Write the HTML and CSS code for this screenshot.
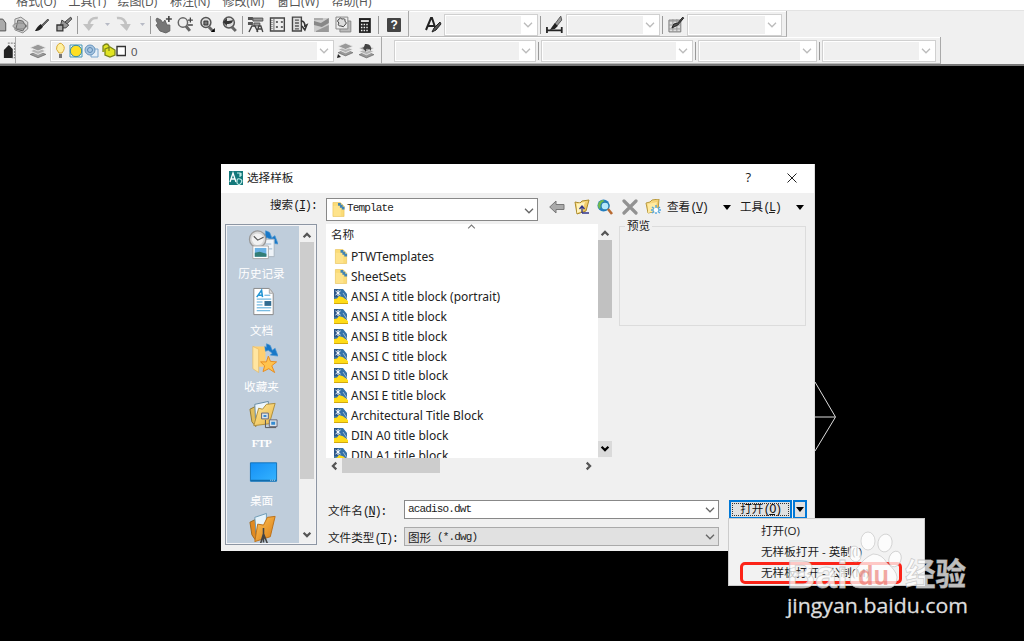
FILE: index.html
```html
<!DOCTYPE html>
<html lang="zh-CN">
<head>
<meta charset="utf-8">
<title>选择样板</title>
<link rel="stylesheet" href="styles.css">
</head>
<body>
<svg class="defs">
  <linearGradient id="gold" x1="0" y1="0" x2="1" y2="1"><stop offset="0" stop-color="#ffe99c"/><stop offset="1" stop-color="#e9b543"/></linearGradient>
  <linearGradient id="orange" x1="0" y1="0" x2="1" y2="1"><stop offset="0" stop-color="#ffc45c"/><stop offset="1" stop-color="#d97c10"/></linearGradient>
  <linearGradient id="blue" x1="0" y1="0" x2="1" y2="1"><stop offset="0" stop-color="#158ff5"/><stop offset="1" stop-color="#35b4ff"/></linearGradient>
  <symbol id="chev" viewBox="0 0 10 6"><path d="M1 .8 5 4.8 9 .8" fill="none" stroke="currentColor" stroke-width="1.3"/></symbol>
  <symbol id="bold-chev" viewBox="0 0 10 8"><path d="M1.6 1.7 5 5.1 8.400 1.7" fill="none" stroke="currentColor" stroke-width="2.2"/></symbol>
  <symbol id="folder" viewBox="0 0 14 16"><path d="M1 .5h8l4 4v11H1z" fill="#fbdc77" stroke="#e6bd50" stroke-width=".6"/><path d="M1.5 4h8v11h-8z" fill="#ffe796" opacity=".65"/><path d="M6.500 1h3v2h2v2h2v3h-3V6h-2V4h-2z" fill="#3f83b5"/></symbol>
  <symbol id="dwt" viewBox="0 0 14 15"><path d="M0 0h9l4 5v6l-6-2-7 2z" fill="#3672a8"/><path d="M0 0h4v8H0z" fill="#2a5588"/><path d="M4 1v6M1.500 2l5 4M6.500 2l-5 4" stroke="#fff" stroke-width="1"/><path d="M9 4l4 6" stroke="#9dbbd2" stroke-width="1"/><path d="M0 10 3 9.500 5 7l4 1.200L14 12v3H0z" fill="#ffdc18"/><path d="M0 14h14v1H0z" fill="#d3a810"/></symbol>
  <symbol id="layers" viewBox="0 0 16 16"><path d="M1 11l7-3 7 3-7 3z" fill="#999" stroke="#666" stroke-width=".6"/><path d="M1 8l7-3 7 3-7 3z" fill="#b4b4b4" stroke="#eee" stroke-width=".8"/><path d="M1 5l7-3 7 3-7 3z" fill="#999" stroke="#e8e8e8" stroke-width=".8"/></symbol>
  <symbol id="links" viewBox="0 0 14 14"><path d="M2 0l4 2 2 5 3-2 3 8-8-1 2-2-4-3-3 1-1-5 2 1z" fill="#1878c8" stroke="#4a96d2" stroke-width=".7"/></symbol>
</svg>

<nav class="menubar"><span>格式(O)</span><span>工具(T)</span><span>绘图(D)</span><span>标注(N)</span><span>修改(M)</span><span>窗口(W)</span><span>帮助(H)</span></nav>

<div class="toolbar">
  <div class="group std">
    <svg class="ic" viewBox="0 0 22 22"><path d="M10 5h5l3 4v8h-8z" fill="#aaa" stroke="#555"/></svg>
    <svg class="ic" viewBox="0 0 22 22"><path d="M5 5l6-2 7 5v7l-5 4-8-3z" fill="#ddd" stroke="#888"/><path d="M8 6l5 1 3 5-3 5-7-2z" fill="#aaa" stroke="#666"/><ellipse cx="10" cy="12" rx="7" ry="3" fill="none" stroke="#888"/></svg>
    <svg class="ic" viewBox="0 0 22 22"><path d="M17 5l-7 7 1 1 7-7z" fill="#777" stroke="#444"/><path d="M10 10l2 3c-3 4-6 4-8 4 2-3 3-5 6-7z" fill="#222"/></svg>
    <svg class="ic" viewBox="0 0 22 22"><path d="M18 3l-6 5 2 2 5-5z" fill="#888" stroke="#444"/><path d="M9 6l7 5-3 3H7z" fill="#999" stroke="#444"/><path d="M4 11h6v6H4z" fill="#aaa" stroke="#333" stroke-width="1.3"/></svg>
    <i class="sep"></i>
    <svg class="ic" viewBox="0 0 22 22"><path d="M17 4C11 3 8 7 8 11" fill="none" stroke="#c2c2c2" stroke-width="2.6"/><path d="M2 10h11l-5 7z" fill="#c2c2c2"/></svg>
    <svg class="tiny" viewBox="0 0 12 22"><path d="M3 9h5L5.500 12z" fill="#b7bac5"/></svg>
    <svg class="ic" viewBox="0 0 22 22"><path d="M3 4c6-1 9 3 9 7" fill="none" stroke="#c2c2c2" stroke-width="2.600"/><path d="M6 10h11l-4 7z" fill="#c2c2c2"/></svg>
    <svg class="tiny" viewBox="0 0 12 22"><path d="M4 9h5L6.500 12z" fill="#b7bac5"/></svg>
    <i class="sep narrow"></i>
    <svg class="ic" viewBox="0 0 22 22"><path d="M4 4l4 2 2 3 2-3 2 5 3 0v6l-4 2-6-2-4-6 2-1-2-4z" fill="#777" stroke="#666"/><path d="M13 5h6M16 2v6" stroke="#444" stroke-width="1.600"/></svg>
    <svg class="ic" viewBox="0 0 22 22"><circle cx="8" cy="8.500" r="4.700" fill="#eee" stroke="#666" stroke-width="1.500"/><path d="M11 12l4 5" stroke="#666" stroke-width="3"/><path d="M13 6h5M15.500 3.500v5M13 11h5" stroke="#444" stroke-width="1.300"/></svg>
    <svg class="ic" viewBox="0 0 22 22"><circle cx="9" cy="8.500" r="5" fill="#ddd" stroke="#555" stroke-width="1.500"/><path d="M7 7h4v4H7z" fill="#777" stroke="#333"/><path d="M12 13l4 4" stroke="#666" stroke-width="3"/><path d="M18 14v4h-4z" fill="#000"/></svg>
    <svg class="ic" viewBox="0 0 22 22"><circle cx="10" cy="8.500" r="5.500" fill="#ddd" stroke="#555" stroke-width="1.500"/><path d="M13 13l4 4" stroke="#666" stroke-width="3"/><path d="M4 8l4 4v-2c4 0 6-1 6-4-2 1-4 1-6 1V4z" fill="#333"/></svg>
    <i class="sep narrow"></i>
    <svg class="ic" viewBox="0 0 22 22"><path d="M3 3h5v3H3zM3 8h5v3H3z" fill="#555"/><path d="M8 4h10v3H8zM9 9h6v3H9z" fill="#999" stroke="#555"/><path d="M4 18l3-6h3l3 6M12 18l2-6h2l2 6M13 15h4" fill="none" stroke="#444" stroke-width="1.400"/></svg>
    <svg class="ic" viewBox="0 0 22 22"><path d="M3.500 4h14v13h-14z" fill="#eee" stroke="#444" stroke-width="1.400"/><path d="M7 4v13" stroke="#666"/><path d="M9 7h2v2H9zM14 7h2v2h-2zM9 12h2v2H9zM14 12h2v2h-2z" fill="#666"/><path d="M5 6v9" stroke="#555" stroke-dasharray="1 1"/></svg>
    <svg class="ic" viewBox="0 0 22 22"><path d="M3.500 3h9v14h-9z" fill="#ddd" stroke="#444" stroke-width="1.400"/><path d="M6 6h4M6 9h4M6 12h4M6 15h4" stroke="#555" stroke-width="1.300"/><path d="M12 7c3 0 4 2 4 5l2-1-2 5-3-4" fill="none" stroke="#333" stroke-width="1.600"/></svg>
    <svg class="ic" viewBox="0 0 22 22"><path d="M3 4h15v14H3z" fill="#ccc"/><path d="M3 7l7 2 8-5v5l-7 4-8-2z" fill="#888"/><path d="M5 17l13-6v7H5z" fill="#999"/><path d="M3 4h9v2H3z" fill="#aaa"/></svg>
    <svg class="ic" viewBox="0 0 22 22"><path d="M7 7h11v11H7z" fill="#bbb" stroke="#888"/><path d="M3 3h12v12H3z" fill="#eee" stroke="#888"/><path d="M6 5q2-2 3 0 4-1 3 2 3 2 0 4-1 3-4 1-4 0-2-3-3-2 0-4z" fill="#ddd" stroke="#444"/></svg>
    <svg class="ic" viewBox="0 0 22 22"><path d="M5 4h12v15H5z" fill="#222"/><path d="M7 6h8v2H7z" fill="#ddd"/><path d="M7 10.500h8M7 13.500h8M7 16.500h8" stroke="#eee" stroke-width="1.400" stroke-dasharray="1.500 1.200"/></svg>
    <i class="sep narrow"></i>
    <span class="help">?</span>
  </div>
  <div class="group styles">
    <svg class="brush-a" viewBox="0 0 22 22"><path d="M4 16L9 4h1l4 12M6 12h7" fill="none" stroke="#222" stroke-width="2"/><path d="M18 8l-6 6-2 4 4-2 5-6z" fill="#555" stroke="#222"/></svg>
    <span class="combo w94"><svg><use href="#chev"/></svg></span><i class="sep six"></i>
    <svg class="ic" viewBox="0 0 22 22"><path d="M17 2l-6 8 2 2 5-6z" fill="#999" stroke="#555"/><path d="M11 9l3 3-3 3-5 1 2-3z" fill="#222"/><path d="M3 13v6M18 13v6M3 16.500h15" stroke="#222" stroke-width="1.800"/></svg>
    <span class="combo w94"><svg><use href="#chev"/></svg></span><i class="sep six"></i>
    <svg class="ic" viewBox="0 0 22 22"><path d="M3 6h12v12H3z" fill="#ddd" stroke="#777"/><path d="M3 7h12M3 11h12M3 15h12M7 5v13M11 5v13" stroke="#999"/><path d="M18 4l-6 7-6 3 2-4 4-1 5-6z" fill="#555" stroke="#222"/></svg>
    <span class="combo w95"><svg><use href="#chev"/></svg></span>
  </div>
</div>
<div class="toolbar second">
  <div class="group edge"><svg class="ic" viewBox="0 0 22 22"><path d="M8 10l5-5 4 4v9H8z" fill="#222"/><path d="M12 3h7v15h-3" fill="none" stroke="#777" stroke-dasharray="2 1"/></svg></div>
  <div class="group layerbar">
    <svg class="ic"><use href="#layers" x="2" y="2" width="18" height="18"/></svg>
    <span class="combo layer">
      <svg class="layer-icons" viewBox="0 0 75 20"><path d="M8 12Q4 8 6 5q3-5 6-1 3 3-1 8z" fill="#fff0a0" stroke="#d9ac3a"/><path d="M8 13h3v4H8z" fill="#777"/><path d="M19 4h12v12H19z" fill="none" stroke="#4497b8"/><circle cx="25" cy="10" r="5.700" fill="#ffdf23" stroke="#3b8da5"/><path d="M40 8h7v8h-7z" fill="#e6eff8" stroke="#7aa6cf"/><circle cx="39" cy="9" r="5" fill="#a8c6e2" stroke="#6794bd"/><circle cx="39" cy="9" r="2.500" fill="none" stroke="#5d89b4"/><path d="M52 11V5q4-4 6 0v5M54 8l5-2 5 3v5l-5 2-5-2z" fill="#e1e422" stroke="#7b851b" stroke-width="1.300"/><path d="M66 5.500h8.500v9H66z" fill="#fff" stroke="#333" stroke-width="1.400"/></svg><b>0</b>
      <svg><use href="#chev"/></svg></span>
    <svg class="ic"><use href="#layers" x="3" y="1" width="17" height="17"/><path d="M3 18l4-1-3-3z" fill="#222"/></svg>
    <svg class="ic"><use href="#layers" x="2" y="3" width="17" height="17"/><path d="M7 8l3 4 0-3q4-1 5 2 1-8-6-7l-1 3z" fill="#444"/></svg>
  </div>
  <div class="group props">
    <span class="combo p1"><svg><use href="#chev"/></svg></span><i class="sep six"></i>
    <span class="combo p2"><svg><use href="#chev"/></svg></span><i class="sep six"></i>
    <span class="combo p3"><svg><use href="#chev"/></svg></span><i class="sep six"></i>
    <span class="combo p4"><svg><use href="#chev"/></svg></span>
  </div>
</div>

<main class="canvas">
  <svg class="drawing" viewBox="0 0 22 72"><path d="M0 1l20.500 35L0 70M0 36h20" fill="none" stroke="#ddd"/></svg>

  <section class="dialog">
    <header>
      <svg class="app" viewBox="0 0 14 14"><path d="M0 0h14v14H0z" fill="#14797b"/><path d="M1 11L4 2l3 9M2 8h4" fill="none" stroke="#fff" stroke-width="1.300"/><path d="M8 2h3v4M8 10q0-3 3-2t1 4-4 0zM12 2v3" fill="none" stroke="#bceae6" stroke-width="1.200"/></svg>
      <h1>选择样板</h1><span class="q">?</span>
      <svg class="close" viewBox="0 0 10 10"><path d="M.5.5l9 9M9.500.5l-9 9" stroke="#222" stroke-width="1"/></svg>
    </header>
    <div class="lookup">
      <label>搜索<tt>(<u>I</u>):</tt></label>
      <div class="field look"><svg class="fold"><use href="#folder"/></svg><tt>Template</tt><svg class="ch"><use href="#chev"/></svg></div>
      <svg class="t back" viewBox="0 0 16 14"><path d="M.7 7L7 1v3.500h8v5H7V13z" fill="#aaa" stroke="#777"/></svg>
      <svg class="t up" viewBox="0 0 16 16"><path d="M1 3l5 1 2-2 7-1-3 11-9 3z" fill="url(#gold)" stroke="#ab8a2a"/><path d="M3 5l8-2-3 9-5 2z" fill="#fff3bd"/><path d="M8 14V8M5.500 10L8 7l2.500 3M8 14h7" fill="none" stroke="#313588" stroke-width="1.300"/></svg>
      <svg class="t globe" viewBox="0 0 16 16"><circle cx="6.500" cy="6.500" r="6" fill="#2680c4"/><path d="M2 3q4-4 6 0l-2 4-4 3Q0 6 2 3" fill="#72bb4b"/><circle cx="8" cy="7" r="4" fill="#b5e8fb" stroke="#247bad" stroke-width="1.300"/><path d="M11 10l4 5" stroke="#b86a31" stroke-width="2.600"/></svg>
      <svg class="t del" viewBox="0 0 16 16"><path d="M2 2l12 12M14 2L2 14" stroke="#929292" stroke-width="3.200" stroke-linecap="round"/></svg>
      <svg class="t new" viewBox="0 0 16 16"><path d="M1 4l4-1 2-2 7-1-1 12-10 2z" fill="url(#gold)" stroke="#b89a40"/><path d="M3 5l9-2-2 9-7 2z" fill="#ffeaa1"/><path d="M11 6v9M7 8l8 6M15 8l-8 6M6 11h10" stroke="#51a6df" stroke-width="1.400"/><circle cx="11" cy="11" r="2.300" fill="#fff"/></svg>
      <span class="cmd">查看<tt>(<u>V</u>)</tt></span><i class="tri"></i>
      <span class="cmd tools">工具<tt>(<u>L</u>)</tt></span><i class="tri last"></i>
    </div>
    <div class="content">
      <aside class="places">
        <div class="place-list">
          <div class="place"><svg viewBox="0 0 32 32"><use href="#links" x="16" y="1" width="15" height="15"/><path d="M14 10h13v18H14z" fill="#eef3f8" stroke="#aab6c1"/><path d="M16 15h8M18 20h7" stroke="#9bb6cc"/><circle cx="10" cy="10" r="8.500" fill="#d8d8d8" stroke="#999" stroke-width="1.300"/><circle cx="10" cy="10" r="6" fill="#f2f2f2"/><path d="M6 7l4 4 6-3" fill="none" stroke="#555" stroke-width="1.200"/><path d="M5 17h16v13H5z" fill="#fff" stroke="#aaa"/><path d="M7 19h12v9H7z" fill="#6bb2e5"/><path d="M7 24l5-1 7 2v3H7z" fill="#327d75"/></svg><span>历史记录</span></div>
          <div class="place"><svg viewBox="0 0 32 32"><path d="M6 2h16l4 5v22H6z" fill="#fff" stroke="#888"/><path d="M22 2v5h4z" fill="#ddd" stroke="#aaa"/><path d="M9 11l5-7 1 7M11 9h4" fill="none" stroke="#2395d3" stroke-width="1.600"/><path d="M17 9h6M9 13h15M9 16h6M9 19h6M9 22h15M9 25h14" stroke="#4aa4d8"/><path d="M17 15h7v5h-7z" fill="#326c91"/></svg><span>文档</span></div>
          <div class="place"><svg viewBox="0 0 32 32"><path d="M5 4h13v21H9l-4-3z" fill="#ffcf70"/><path d="M5 4l6 3v24l-6-4z" fill="#ffe5a1" stroke="#e4b863" stroke-width=".7"/><use href="#links" x="17" y="1" width="14" height="14"/><path d="M21 14l2.200 5.500 6.300.5-5 4 3 7-6-4-6 3 1.700-6-4.200-4h6z" fill="#ffc34d" stroke="#e78b1f"/></svg><span>收藏夹</span></div>
          <div class="place"><svg viewBox="0 0 32 32"><path d="M2 10l6-3v21l-4-5z" fill="#e0bd5b" stroke="#927a37"/><path d="M7 5l14-3v19L8 26z" fill="#edf6fb" stroke="#668ba3"/><path d="M6 27l5-18 4 1 4-5 9-1-6 21z" fill="url(#gold)" stroke="#ad8d3c"/><path d="M14 14h7v6h-7zM22 21h8v7h-8z" fill="#dae3ea" stroke="#667"/><path d="M16 16h3v2h-3zM24 23h4v3h-4z" fill="#358bd1"/><path d="M18 21v8h11" fill="none" stroke="#555"/></svg><span class="mono">FTP</span></div>
          <div class="place"><svg viewBox="0 0 32 32"><path d="M2.500 6.500h27v19h-27z" fill="url(#blue)" stroke="#1474ba"/><path d="M3 24h26v1.500H3z" fill="#116dad"/><path d="M23 24.500h5" stroke="#d6f1ff" stroke-dasharray="1 1"/></svg><span>桌面</span></div>
          <div class="place"><svg viewBox="0 0 32 32"><path d="M2 10l6-3v22l-4-6z" fill="#e18a22" stroke="#9b6822"/><path d="M7 5l12-4v19L9 27z" fill="#e7f4fc" stroke="#6d9bb5"/><path d="M7 30l3-18 6 1 4-8 8-1-5 21z" fill="url(#orange)" stroke="#bc7119"/><path d="M16 16v15M16 22l-3 10M16 22l4 10" stroke="#444" stroke-width="1.600"/></svg></div>
        </div>
        <div class="bar side-bar"><svg class="arr rev"><use href="#bold-chev"/></svg><i class="thumb"></i><svg class="arr"><use href="#bold-chev"/></svg></div>
      </aside>
      <div class="right">
        <div class="upper">
          <div class="browser">
            <div class="files">
              <div class="head"><span>名称</span><svg class="rev"><use href="#chev"/></svg></div>
              <div class="file"><svg><use href="#folder"/></svg>PTWTemplates</div>
              <div class="file"><svg><use href="#folder"/></svg>SheetSets</div>
              <div class="file"><svg><use href="#dwt"/></svg>ANSI A title block (portrait)</div>
              <div class="file"><svg><use href="#dwt"/></svg>ANSI A title block</div>
              <div class="file"><svg><use href="#dwt"/></svg>ANSI B title block</div>
              <div class="file"><svg><use href="#dwt"/></svg>ANSI C title block</div>
              <div class="file"><svg><use href="#dwt"/></svg>ANSI D title block</div>
              <div class="file"><svg><use href="#dwt"/></svg>ANSI E title block</div>
              <div class="file"><svg><use href="#dwt"/></svg>Architectural Title Block</div>
              <div class="file"><svg><use href="#dwt"/></svg>DIN A0 title block</div>
              <div class="file"><svg><use href="#dwt"/></svg>DIN A1 title block</div>
            </div>
            <div class="bar vbar"><svg class="arr rev"><use href="#bold-chev"/></svg><i class="thumb"></i><span class="down"><svg class="arr"><use href="#bold-chev"/></svg></span></div>
            <div class="hbar"><svg class="arr left"><use href="#bold-chev"/></svg><i class="thumb"></i><svg class="arr right-arrow"><use href="#bold-chev"/></svg></div>
          </div>
          <fieldset><legend>预览</legend></fieldset>
        </div>
        <div class="form">
          <div class="line"><label>文件名<tt>(<u>N</u>):</tt></label><div class="field name"><tt>acadiso.dwt</tt><svg class="ch"><use href="#chev"/></svg></div><button class="open"><span>打开<tt>(<u>O</u>)</tt></span></button><button class="drop"><i class="tri"></i></button></div>
          <div class="line"><label>文件类型<tt>(<u>T</u>):</tt></label><div class="field gray">图形<tt>&nbsp;(*.dwg)</tt><svg class="ch"><use href="#chev"/></svg></div></div>
        </div>
      </div>
    </div>
  </section>

  <div class="popup"><span>打开(O)</span><span>无样板打开 - 英制(I)</span><span>无样板打开 - 公制(M)</span></div>
  <div class="highlight"></div>
  <svg class="watermark" viewBox="0 0 190 100">
    <g fill="#fff" fill-opacity=".75" stroke="#bbb" stroke-opacity=".7" stroke-width=".8">
      <text x="4" y="62" class="baidu" textLength="61" lengthAdjust="spacingAndGlyphs">Bai</text>
      <ellipse cx="72" cy="28" rx="6" ry="8" transform="rotate(-15 72 28)"/><ellipse cx="85" cy="15" rx="7" ry="9"/><ellipse cx="102" cy="17" rx="7" ry="9" transform="rotate(12 102 17)"/><ellipse cx="112" cy="33" rx="6" ry="8" transform="rotate(20 112 33)"/>
      <path d="M74 42Q82 31 90 28q9 0 14 9 9 7 10 14 0 12-11 11H77q-10 0-10-9 0-5 7-11z"/>
      <text x="122" y="59" class="exp" textLength="61" lengthAdjust="spacingAndGlyphs">经验</text>
    </g>
    <text x="75" y="59" class="du" textLength="31" lengthAdjust="spacingAndGlyphs">du</text>
    <text x="4" y="87" class="url" textLength="181" lengthAdjust="spacingAndGlyphs">jingyan.baidu.com</text>
  </svg>
</main>
</body>
</html>
```
FILE: styles.css
```css
* { box-sizing: border-box; }
body { margin: 0; width: 1024px; height: 641px; overflow: hidden; background: #000; color: #1c1c1c; font: 11.6px "Liberation Sans", "Noto Sans CJK SC", sans-serif; }
svg { display: block; flex: none; }
.defs { position: absolute; width: 0; height: 0; }
tt { font-family: "Liberation Mono", "Noto Sans CJK SC", monospace; font-size: 11px; letter-spacing: -.85px; }
label tt, .cmd tt, button tt { font-size: 12px; letter-spacing: -1.4px; }
u { text-underline-offset: 1px; }

.menubar { height: 10px; background: #fff; display: flex; overflow: hidden; padding-left: 16px; gap: 13px; color: #555; font: 12px/18px "Open Sans", "Noto Sans CJK SC", sans-serif; }
.menubar span { margin-top: -7px; height: 18px; white-space: nowrap; flex: none; width: 39.500px; }
.menubar span:nth-child(2) { width: 36px; }
.menubar span:nth-child(n+5) { width: 41.500px; }

.toolbar { height: 27px; display: flex; background: #f0f0f0; border-top: 1px solid #e3e3e3; }
.toolbar.second { height: 29px; border-top: 0; border-bottom: 2px solid #777; }
.group { display: flex; align-items: center; height: 26px; border-bottom: 1px solid #bbb; border-right: 1px solid #aaa; overflow: hidden; flex: none; box-shadow: inset 0 1px #fff; padding-top: 3px; }
.second .group { height: 27px; padding-top: 2px; }
.ic { width: 21.700px; height: 22px; }
.tiny { width: 12px; height: 22px; }
.sep { flex: none; width: 6px; height: 18px; border-left: 1px solid #999; margin-left: 2px; margin-right: -2px; }
.narrow { width: 5px; }
.six { width: 6px; }
.std { width: 409px; }
.std > .ic:nth-child(n+11) { width: 21.800px; }
.std > :first-child { margin-left: -12px; }
.help { width: 14px; height: 14px; margin-left: 6px; background: #444; color: #fff; font: bold 12px/14px "Liberation Sans", sans-serif; text-align: center; border-radius: 1px; }
.styles { width: 377px; padding-left: 12px; margin-left: 1px; }
.brush-a { width: 22px; height: 22px; }
.combo { flex: none; height: 22px; border: 1px solid #d0d0d0; background: #fff; display: flex; align-items: center; justify-content: flex-end; padding-right: 4px; color: #bbb; background-image: linear-gradient(#f0f0f0, #f0f0f0); background-repeat: no-repeat; background-size: calc(100% - 17px) 18px; background-position: 1px 1px; }
.combo > svg:last-child { width: 10px; height: 6px; }
.w94 { width: 94px; }
.w95 { width: 95px; }
.edge { width: 16px; justify-content: flex-end; }
.edge .ic { margin-right: -3px; }
.layerbar { width: 366px; padding-left: 11px; }
.layerbar > .ic { width: 22px; }
.layerbar > .ic:first-child { margin-right: 1px; }
.layer { width: 284px; }
.layer-icons { width: 75px; height: 20px; }
.layer b { margin: 0 auto 0 5px; color: #555; font-weight: 400; }
.props { width: 559px; padding-left: 12px; }
.props .sep { width: 5px; }
.p1 { width: 142px; } .p2 { width: 152px; } .p3 { width: 119px; } .p4 { width: 114px; }

.canvas { height: 575px; background: #000; }
.drawing { position: absolute; left: 815px; top: 381px; width: 22px; height: 72px; }
.dialog { position: absolute; left: 221px; top: 164px; width: 594px; height: 387px; background: #f0f0f0; border-right: 1px solid #ddd; }
.dialog header { height: 29px; background: #fff; display: flex; align-items: center; padding: 0 17px 1px 8px; }
.app { width: 14px; height: 14px; margin-right: 4px; }
h1 { margin: 0 0 2px; font-size: 11.600px; font-weight: 400; flex: 1; }
.q { font: 13px "Open Sans", sans-serif; margin: 0 36px 2px 0; }
.close { width: 10px; height: 10px; }
.lookup { height: 31px; display: flex; align-items: center; padding-bottom: 3px; }
.lookup label { width: 56px; margin-left: 49px; padding-bottom: 6px; white-space: nowrap; font-size: 11.600px; }
.field { display: flex; align-items: center; background: #fff; border: 1px solid #888; height: 19px; width: 315px; padding: 0 3px; }
.look { width: 212px; height: 23px; margin-top: 4px; padding: 0 3px 0 5px; }
.look tt { margin-left: 2px; padding-bottom: 3px; }
.name tt { padding-bottom: 1px; }
.fold { width: 13px; height: 15px; }
.ch { width: 10px; height: 6px; margin-left: auto; color: #666; }
.look .ch { margin-top: 3px; }
.t { width: 16px; height: 16px; }
.back { margin-left: 11px; height: 14px; } .up { margin-left: 9px; } .globe { margin-left: 7px; } .del { margin-left: 9px; } .new { margin-left: 7px; }
.cmd { margin-left: 6px; width: 41px; white-space: nowrap; padding-bottom: 1px; }
.tools { margin-left: 9px; }
.tri { width: 0; height: 0; border: 4px solid transparent; border-top: 5px solid #000; border-bottom: 0; flex: none; margin-left: 15px; }

.content { display: flex; height: 324px; padding-left: 4px; }
.places { width: 92px; height: 321px; border: 1px solid #8d96a3; display: flex; flex: none; background: #f4f4f6; padding: 1px; }
.place-list { width: 72px; overflow: hidden; background: #bfcddb; padding-top: 3px; }
.place { height: 56.700px; width: 69px; display: flex; flex-direction: column; align-items: center; color: #fff; line-height: 15px; }
.place svg { width: 31px; height: 32px; margin: 0 0 5px 3px; }
.place .mono { font: bold 11px/15px "Liberation Serif", serif; letter-spacing: -.5px; }
.bar { display: flex; flex-direction: column; align-items: center; background: #f0f0f0; color: #555; }
.arr { width: 10px; height: 8px; }
.rev { transform: rotate(180deg); }
.thumb { background: #cdcdcd; }
.side-bar { width: 16px; padding: 5px 0 4px; justify-content: space-between; }
.side-bar .thumb { width: 14px; height: 237px; margin-top: 3px; margin-bottom: auto; }
.right { flex: 1; margin-left: 9px; }
.upper { display: flex; height: 249px; }
.browser { width: 286px; height: 249px; display: grid; grid-template: 234px 15px / 272px 14px; }
.files { background: #fff; overflow: hidden; padding-left: 8px; font-family: "Noto Sans", "Noto Sans CJK SC", sans-serif; }
.head { height: 23px; display: flex; }
.head span { margin-left: -3px; line-height: 22px; }
.head svg { width: 9px; height: 5px; margin-left: 113px; color: #777; }
.file { height: 19.850px; display: flex; align-items: center; font-size: 12px; color: #222; white-space: pre; }
.file svg { width: 14px; height: 15px; margin-right: 3px; }
.vbar { padding-top: 5px; }
.vbar .thumb { width: 14px; height: 78px; margin-top: 3px; background: #c1c1c1; }
.down { width: 14px; height: 16px; margin: auto 0 1px; background: #dadada; color: #000; padding: 4px 2px; }
.hbar { grid-column: 1; display: flex; align-items: center; color: #555; }
.left { transform: rotate(90deg); margin-left: 3px; }
.right-arrow { transform: rotate(-90deg); margin-left: auto; margin-right: 4px; }
.hbar .thumb { width: 98px; height: 15px; margin-left: 3px; }
fieldset { width: 187px; height: 107px; border: 1px solid #dcdcdc; margin: -5px 0 0 7px; padding: 0; flex: none; }
legend { margin-left: 5px; padding: 0 2px; line-height: 14px; }
.form { padding-top: 27px; }
.line { display: flex; height: 27px; align-items: flex-start; }
.line label { width: 78px; padding-left: 2px; line-height: 22px; white-space: nowrap; }
.gray { background: #e1e1e1; border-color: #aaa; }
button { font: inherit; padding: 1px; border: 2px solid #0078d7; background: #e1e1e1; height: 19px; display: flex; align-items: center; justify-content: center; color: #111; }
.open { width: 63px; margin-left: 10px; }
.open span { border: 1px dotted #333; height: 13px; line-height: 9px; width: 57px; }
.drop { width: 14px; margin-left: 1px; }
.drop .tri { margin: 0; }

.popup { position: absolute; left: 728px; top: 518px; width: 197px; height: 68px; background: #f2f2f2; border: 1px solid #ccc; padding: 1px 0 0 32px; display: flex; flex-direction: column; font-family: "Open Sans", "Noto Sans CJK SC", sans-serif; }
.popup span { height: 21px; line-height: 21px; white-space: nowrap; }
.highlight { position: absolute; left: 740px; top: 562px; width: 162px; height: 22px; border: 3px solid #fc2418; border-radius: 5px; }
.watermark { position: absolute; left: 783px; top: 526px; width: 190px; height: 100px; }
.baidu { font: bold 38px "Liberation Sans", sans-serif; }
.exp { font: bold 31px "Noto Sans CJK SC", sans-serif; }
.du { font: bold 27px "Liberation Sans", sans-serif; fill: #e65449; fill-opacity: .5; }
.url { font: 20.500px "Open Sans", sans-serif; fill: #ddd; stroke: #ddd; stroke-width: .3; }
```
